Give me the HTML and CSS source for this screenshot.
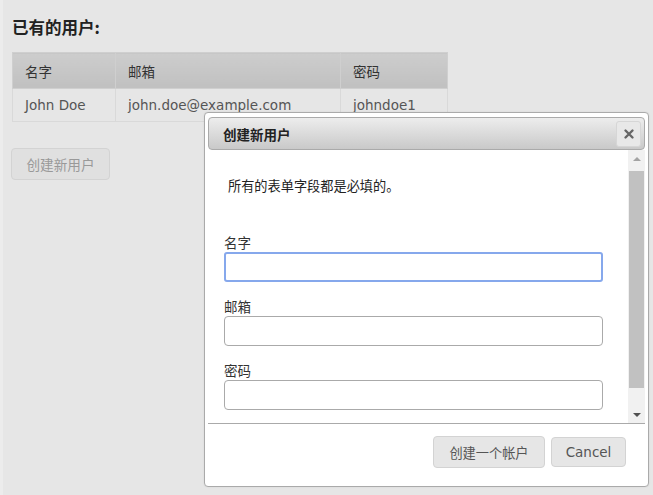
FILE: index.html
```html
<!DOCTYPE html>
<html lang="zh-CN">

<head>
    <meta charset="UTF-8" />
    <title>创建新用户</title>
    <link rel="stylesheet" href="styles.css">
</head>

<body>
    <div class="users-contain">
        <h1>已有的用户:</h1>
        <table class="users">
            <thead>
                <tr>
                    <th class="col-name">名字</th>
                    <th class="col-email">邮箱</th>
                    <th class="col-pass">密码</th>
                </tr>
            </thead>
            <tbody>
                <tr>
                    <td>John Doe</td>
                    <td>john.doe@example.com</td>
                    <td>johndoe1</td>
                </tr>
            </tbody>
        </table>
        <button class="btn btn-disabled" type="button">创建新用户</button>
    </div>

    <div class="dialog">
        <div class="dialog-titlebar">
            <span class="dialog-title">创建新用户</span>
            <button class="dialog-close" type="button" title="Close">
                <svg width="12" height="12" viewBox="0 0 12 12">
                    <path d="M2.5 2.5 L9.5 9.5 M9.5 2.5 L2.5 9.5" stroke="#666" stroke-width="2.4" stroke-linecap="round" />
                </svg>
            </button>
        </div>

        <div class="dialog-content">
            <div class="dialog-body">
                <p class="tips">所有的表单字段都是必填的。</p>
                <form>
                    <label for="name">名字</label>
                    <input type="text" id="name" class="field focused" />
                    <label for="email">邮箱</label>
                    <input type="text" id="email" class="field" />
                    <label for="password">密码</label>
                    <input type="password" id="password" class="field" />
                </form>
            </div>
            <div class="scrollbar">
                <div class="arrow arrow-up"></div>
                <div class="track">
                    <div class="thumb"></div>
                </div>
                <div class="arrow arrow-down"></div>
            </div>
        </div>

        <div class="dialog-buttonpane">
            <button class="btn" type="button">创建一个帐户</button>
            <button class="btn btn-cancel" type="button">Cancel</button>
        </div>
    </div>
</body>

</html>
```

FILE: styles.css
```css
* {
    margin: 0;
    padding: 0;
    box-sizing: border-box;
}

body {
    font-family: "DejaVu Sans", "Noto Sans CJK SC", sans-serif;
    background: #e6e6e6;
    color: #333;
    width: 653px;
    height: 495px;
    overflow: hidden;
    position: relative;
    border-left: 3px solid #ececec;
}

.users-contain {
    padding: 15px 0 0 9px;
}

.users-contain h1 {
    font-family: "Noto Sans CJK SC", sans-serif;
    font-size: 16.5px;
    font-weight: bold;
    color: #222;
    line-height: 24px;
    margin-bottom: 13px;
}

.users {
    border-collapse: collapse;
    width: 436px;
    font-size: 13.5px;
    margin-bottom: 26px;
}

.users th,
.users td {
    text-align: left;
    padding: 0 12px;
    border: 1px solid #d9d9d9;
}

.users th {
    height: 36px;
    font-family: "Noto Sans CJK SC", sans-serif;
    font-weight: normal;
    color: #333;
    background: linear-gradient(#cdcdcd, #c0c0c0);
    border-color: #cfcfcf;
}

.users td {
    height: 33px;
    color: #555;
}

.col-name {
    width: 103px;
}

.col-email {
    width: 225px;
}

.btn {
    font-family: "Noto Sans CJK SC", sans-serif;
    font-size: 13.2px;
    color: #555;
    height: 32px;
    padding: 0 12px;
    border: 1px solid #d3d3d3;
    border-radius: 4px;
    background: #e6e6e6;
    cursor: pointer;
}

.btn-disabled {
    font-size: 13.6px;
    color: #999;
    background: #e0e0e0;
    width: 99px;
    margin-left: -1px;
    padding: 0;
}

/* dialog sits on top of the page */
.dialog {
    position: absolute;
    left: 201px;
    top: 112px;
    width: 445px;
    height: 375px;
    background: #fff;
    border: 1px solid #aaa;
    border-radius: 4px;
    padding: 4px 3px 3px 3px;
    display: flex;
    flex-direction: column;
    box-shadow: 0 0 2px rgba(0, 0, 0, 0.08);
}

.dialog-titlebar {
    height: 33px;
    display: flex;
    align-items: center;
    justify-content: space-between;
    padding: 0 3px 0 14px;
    border: 1px solid #aaa;
    border-radius: 4px;
    background: linear-gradient(#ededed, #c9c9c9);
}

.dialog-title {
    font-family: "Noto Sans CJK SC", sans-serif;
    font-size: 13.5px;
    font-weight: bold;
    color: #222;
}

.dialog-close {
    width: 25px;
    height: 26px;
    border: 1px solid #d6d6d6;
    border-radius: 3px;
    background: #e8e8e8;
    display: flex;
    align-items: center;
    justify-content: center;
}

.dialog-content {
    height: 273px;
    display: flex;
}

.dialog-body {
    flex: 1;
    padding: 26px 0 0 16px;
}

.tips {
    font-family: "Noto Sans CJK SC", sans-serif;
    font-size: 13.2px;
    color: #222;
    margin: 0 0 36px 4px;
    line-height: 20px;
}

form label {
    display: block;
    font-family: "Noto Sans CJK SC", sans-serif;
    font-size: 13.5px;
    color: #333;
    line-height: 20px;
}

.field {
    display: block;
    width: 379px;
    height: 30px;
    border: 1px solid #aaa;
    border-radius: 4px;
    margin-bottom: 14px;
    font-size: 13px;
    outline: none;
}

.field.focused {
    border: 2px solid #86a8ec;
    border-radius: 3px;
}

.scrollbar {
    width: 17px;
    display: flex;
    flex-direction: column;
    background: #f1f1f1;
}

.arrow {
    height: 17px;
    display: flex;
    align-items: center;
    justify-content: center;
}

.arrow-up::before,
.arrow-down::before {
    content: "";
    border-left: 4px solid transparent;
    border-right: 4px solid transparent;
}

.arrow-up::before {
    border-bottom: 4px solid #a3a3a3;
}

.arrow-down::before {
    border-top: 4px solid #505050;
}

.track {
    flex: 1;
    padding: 0 0 22px 0;
}

.thumb {
    height: 100%;
    margin: 4px 1px 0 1px;
    background: #c1c1c1;
}

.dialog-buttonpane {
    flex: 1;
    border-top: 1px solid #aaa;
    display: flex;
    justify-content: flex-end;
    align-items: flex-start;
    gap: 6px;
    padding: 12px 19px 0 0;
}

.dialog-buttonpane .btn {
    width: 112px;
}

.dialog-buttonpane .btn-cancel {
    width: 75px;
    height: 30px;
    margin-top: 1px;
    font-family: "DejaVu Sans", sans-serif;
    font-size: 13.5px;
}
```
